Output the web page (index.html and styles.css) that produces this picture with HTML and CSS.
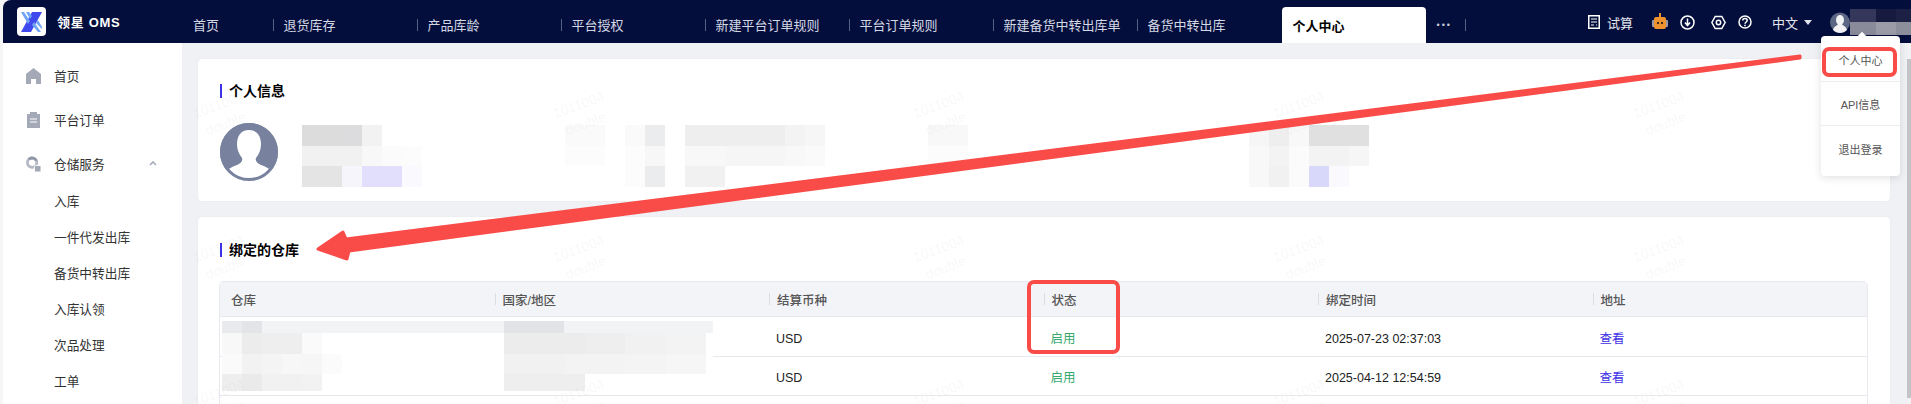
FILE: index.html
```html
<!DOCTYPE html>
<html lang="zh-CN">
<head>
    <meta charset="UTF-8">
    <title>个人中心 - 领星 OMS</title>
    <link rel="stylesheet" href="styles.css">
</head>
<body>
<div class="page">
    <header class="topbar">
        <div class="brand">
            <div class="logo">
                <svg width="29" height="29" viewBox="0 0 29 29">
                    <path d="M15 5h10L14 25H4z" fill="#3f49ee"/>
                    <path d="M4 5h3l6 9-2 3zM9 5h3l3 4-2 3z" fill="#6fa4f7"/>
                    <path d="M15 18l2-3 7 10h-3zM19 16l2-3 4 7v2z" fill="#6fa4f7"/>
                </svg>
            </div>
            <span class="brand-name">领星 OMS</span>
        </div>
        <nav class="tabs">
            <a class="tab tab-first">首页</a>
            <a class="tab">退货库存</a>
            <a class="tab">产品库龄</a>
            <a class="tab">平台授权</a>
            <a class="tab">新建平台订单规则</a>
            <a class="tab">平台订单规则</a>
            <a class="tab">新建备货中转出库单</a>
            <a class="tab">备货中转出库</a>
            <a class="tab tab-active">个人中心</a>
            <span class="tab-more">•••</span>
        </nav>
        <div class="tools">
            <svg class="tool-calc" width="12" height="14" viewBox="0 0 12 14" fill="none" stroke="#fff">
                <rect x="0.75" y="0.75" width="10.5" height="12.5" stroke-width="1.5"/>
                <path d="M3 4h6M3 7h6M3 10h3M8 10h1" stroke-width="1.2"/>
            </svg>
            <span class="tool-label">试算</span>
            <svg class="tool-robot" width="16" height="16" viewBox="0 0 16 16">
                <rect x="7" y="0" width="2" height="5" fill="#e8912d"/>
                <rect x="0" y="7" width="3" height="7" rx="1" fill="#9a9aa4"/>
                <rect x="13" y="7" width="3" height="7" rx="1" fill="#9a9aa4"/>
                <rect x="2" y="4" width="12" height="12" rx="2" fill="#ee9330"/>
                <rect x="5" y="9" width="2" height="2" fill="#3a2a20"/>
                <rect x="9" y="9" width="2" height="2" fill="#3a2a20"/>
            </svg>
            <svg class="tool-down" width="15" height="15" viewBox="0 0 15 15" fill="none" stroke="#fff">
                <circle cx="7.5" cy="7.5" r="6.5" stroke-width="1.5"/>
                <path d="M7.5 3.5v6M5 7.5l2.5 3 2.5-3" stroke-width="1.5"/>
            </svg>
            <svg class="tool-hex" width="15" height="15" viewBox="0 0 15 15" fill="none" stroke="#fff" stroke-width="1.5">
                <path d="M4.2 1.5h6.6l3.3 6-3.3 6H4.2l-3.3-6z"/>
                <circle cx="7.5" cy="7.5" r="2.2"/>
            </svg>
            <svg class="tool-help" width="14" height="14" viewBox="0 0 14 14" fill="none" stroke="#fff" stroke-width="1.5">
                <circle cx="7" cy="7" r="6"/>
                <path d="M4.8 5.4C4.8 3 9.2 3 9.2 5.4 9.2 7 7 7 7 8.8M7 9.8v1.4"/>
            </svg>
            <span class="tool-lang">中文</span>
            <span class="caret"></span>
            <svg class="user-avatar" width="20" height="21" viewBox="0 0 20 21">
                <circle cx="10" cy="10.5" r="10" fill="#5c6684"/>
                <ellipse cx="10" cy="8" rx="4" ry="5" fill="#f2f2f4"/>
                <path d="M3 18c1-4 4-4 5-6h4c1 2 4 2 5 6-2 2-4 3-7 3s-5-1-7-3z" fill="#f2f2f4"/>
            </svg>
            <div class="user-blur">
                <i class="u1"></i><i class="u2"></i><i class="u3"></i>
                <i class="u4"></i><i class="u5"></i><i class="u6"></i>
            </div>
        </div>
    </header>

    <div class="layout">
        <aside class="sidebar">
            <a class="nav-item">
                <svg width="15" height="16" viewBox="0 0 15 16"><path d="M7.5 0L15 6v10h-5v-5H5v5H0V6z" fill="#a3a9b7"/></svg>
                首页
            </a>
            <a class="nav-item">
                <svg width="15" height="16" viewBox="0 0 15 16">
                    <path d="M1 2h3V0h7v2h3v14H1z" fill="#a3a9b7"/>
                    <path d="M4 7h7M4 10h7" stroke="#fff"/>
                </svg>
                平台订单
            </a>
            <a class="nav-item">
                <svg width="15" height="16" viewBox="0 0 16 17">
                    <circle cx="6.5" cy="7" r="5" fill="none" stroke="#b4b9c5" stroke-width="3"/>
                    <path d="M3 3.500A5 5 0 0 1 11 5" fill="none" stroke="#8f96a6" stroke-width="3"/>
                    <rect x="9" y="10" width="7" height="7" rx="1" stroke="#fff" fill="#a3a9b7"/>
                </svg>
                仓储服务
                <svg class="chevron" width="8" height="5" viewBox="0 0 8 5"><path d="M1 4l3-3 3 3" fill="none" stroke="#a3a9b7" stroke-width="1.600"/></svg>
            </a>
            <div class="sub-nav">
                <a class="sub-item">入库</a>
                <a class="sub-item">一件代发出库</a>
                <a class="sub-item">备货中转出库</a>
                <a class="sub-item">入库认领</a>
                <a class="sub-item">次品处理</a>
                <a class="sub-item">工单</a>
            </div>
        </aside>

        <main class="content">
            <section class="card card-profile">
                <h2 class="card-title">个人信息</h2>
                <div class="profile">
                    <svg class="profile-avatar" width="58" height="58" viewBox="0 0 58 58">
                        <circle cx="29" cy="29" r="29" fill="#78829e"/>
                        <path d="M29 7c8 0 12 6 12 14 0 6-2 10-5 14-1 3 1 5 5 7 5 2 8 3 10 6-5 6-13 10-22 10s-17-4-22-10c2-3 5-4 10-6 4-2 6-4 5-7-3-4-5-8-5-14 0-8 4-14 12-14z" fill="#fff"/>
                        <circle cx="29" cy="29" r="27.5" fill="none" stroke="#78829e" stroke-width="3"/>
                    </svg>
                    <div class="mosaic mosaic-a">
                        <i class="dc"></i><i class="dc"></i><i class="dd"></i><i class="f2"></i><i></i><i></i>
                        <i class="f1"></i><i class="f1"></i><i class="f1"></i><i class="f8"></i><i class="fb"></i><i class="fc"></i>
                        <i class="e4"></i><i class="e4"></i><i class="v1"></i><i class="v2"></i><i class="v2"></i><i class="v3"></i>
                    </div>
                    <div class="mosaic mosaic-b">
                        <i class="fa"></i><i class="fa"></i><i></i><i class="fa"></i><i class="eb"></i><i></i><i class="ee"></i><i class="ee"></i><i class="ee"></i><i class="ee"></i><i class="ee"></i><i class="f3"></i><i class="f6"></i>
                        <i class="fc"></i><i class="fc"></i><i></i><i class="fc"></i><i class="f7"></i><i></i><i class="f8"></i><i class="f8"></i><i class="f6"></i><i class="f6"></i><i class="f6"></i><i class="f8"></i><i class="fa"></i>
                        <i></i><i></i><i></i><i class="fc"></i><i class="eb"></i><i></i><i class="f1"></i><i class="f1"></i><i></i><i></i><i></i><i></i><i></i>
                    </div>
                    <div class="mosaic mosaic-c">
                        <i class="f8"></i><i class="f8"></i>
                        <i class="fc"></i><i class="fc"></i>
                        <i></i><i></i>
                    </div>
                    <div class="mosaic mosaic-d">
                        <i class="f6"></i><i class="ee"></i><i class="f8"></i><i class="e1"></i><i class="e1"></i><i class="e1"></i>
                        <i class="f8"></i><i class="f3"></i><i class="fb"></i><i class="f3"></i><i class="f3"></i><i class="f6"></i>
                        <i class="f8"></i><i class="f1"></i><i class="fb"></i><i class="v4"></i><i class="v3"></i><i></i>
                    </div>
                </div>
            </section>

            <section class="card card-warehouse">
                <h2 class="card-title">绑定的仓库</h2>
                <div class="table">
                    <div class="row row-head">
                        <div class="cell">仓库</div>
                        <div class="cell">国家/地区</div>
                        <div class="cell">结算币种</div>
                        <div class="cell">状态</div>
                        <div class="cell">绑定时间</div>
                        <div class="cell">地址</div>
                    </div>
                    <div class="row">
                        <div class="cell"></div>
                        <div class="cell"></div>
                        <div class="cell cell-latin">USD</div>
                        <div class="cell status-on">启用</div>
                        <div class="cell cell-latin">2025-07-23 02:37:03</div>
                        <div class="cell"><a class="link">查看</a></div>
                    </div>
                    <div class="row">
                        <div class="cell"></div>
                        <div class="cell"></div>
                        <div class="cell cell-latin">USD</div>
                        <div class="cell status-on">启用</div>
                        <div class="cell cell-latin">2025-04-12 12:54:59</div>
                        <div class="cell"><a class="link">查看</a></div>
                    </div>
                    <div class="row">
                        <div class="cell"></div><div class="cell"></div><div class="cell"></div>
                        <div class="cell"></div><div class="cell"></div><div class="cell"></div>
                    </div>
                    <div class="table-blur">
                        <div class="blur-strip">
                            <i class="s1"></i><i class="s2"></i><i class="s3"></i><i class="s2b"></i><i class="s3b"></i>
                        </div>
                        <div class="mosaic mosaic-left">
                            <i class="f8"></i><i class="ec"></i><i class="ee"></i><i class="ee"></i><i class="fa"></i><i></i>
                            <i class="fa"></i><i class="f2"></i><i class="f4"></i><i class="f7"></i><i class="f6"></i><i class="fb"></i>
                            <i class="ee"></i><i class="ea"></i><i class="f1"></i><i class="f1"></i><i class="f2"></i><i></i>
                        </div>
                        <div class="mosaic mosaic-right">
                            <i class="ec"></i><i class="ec"></i><i class="ec"></i><i class="ec"></i><i class="ee"></i><i class="ee"></i><i class="f1"></i><i class="f1"></i><i class="f3"></i><i class="f3"></i>
                            <i class="f1"></i><i class="f1"></i><i class="f1"></i><i class="f3"></i><i class="f3"></i><i class="f3"></i><i class="f4"></i><i class="f4"></i><i class="f6"></i><i class="f6"></i>
                            <i class="ee"></i><i class="ee"></i><i class="ee"></i><i class="ee"></i><i></i><i></i><i></i><i></i><i></i><i></i>
                        </div>
                    </div>
                </div>
            </section>
        </main>

        <div class="scrollbar"><div class="scroll-thumb"></div></div>
    </div>

    <!-- watermark tiles -->
    <div class="watermarks">
        <span class="mark">1011004<br>double</span><span class="mark">1011004<br>double</span><span class="mark">1011004<br>double</span><span class="mark">1011004<br>double</span><span class="mark">1011004<br>double</span>
        <span class="mark">1011004<br>double</span><span class="mark">1011004<br>double</span><span class="mark">1011004<br>double</span><span class="mark">1011004<br>double</span><span class="mark">1011004<br>double</span>
        <span class="mark">1011004<br>double</span><span class="mark">1011004<br>double</span><span class="mark">1011004<br>double</span><span class="mark">1011004<br>double</span><span class="mark">1011004<br>double</span>
    </div>

    <div class="user-menu">
        <a class="menu-item">个人中心</a>
        <a class="menu-item">API信息</a>
        <a class="menu-item">退出登录</a>
    </div>

    <!-- red marks drawn on the screenshot -->
    <svg class="annotations" width="1911" height="404" viewBox="0 0 1911 404">
        <path d="M318 249L343 232 346 239 1800 56V58L349 251 347 259z" fill="#f94c48" stroke="#f94c48" stroke-width="3" stroke-linejoin="round"/>
        <rect x="1824" y="49" width="71" height="26" rx="5" fill="none" stroke="#f94c48" stroke-width="4"/>
        <rect x="1029" y="282" width="89" height="70" rx="5" fill="none" stroke="#f94c48" stroke-width="4"/>
    </svg>
</div>
</body>
</html>
```

FILE: styles.css
```css
* {
    box-sizing: border-box;
}

body {
    margin: 0;
    font-family: "Liberation Sans", "Noto Sans CJK SC", sans-serif;
    font-size: 13px;
    color: #333;
}

.page {
    position: relative;
    height: 404px;
    padding-left: 3px;
    overflow: hidden;
    background-color: #f6f6f8;
}

/* top bar */
.topbar {
    display: flex;
    height: 43px;
    background-color: #040e3c;
    border-top-left-radius: 8px;
}

.brand {
    display: flex;
    align-items: flex-start;
    width: 180px;
    padding: 7px 0 0 14px;
}

.logo {
    width: 29px;
    height: 29px;
    background-color: #fff;
    border-radius: 4px;
}

.brand-name {
    margin: 5px 0 0 11px;
    font-size: 13px;
    font-weight: bold;
    letter-spacing: 0.7px;
    color: #fff;
    white-space: nowrap;
}

.tabs {
    display: flex;
    color: #d4d8e4;
}

.tab {
    display: flex;
    align-items: center;
    width: 144px;
    padding-top: 5px;
    white-space: nowrap;
}

.tab::before {
    content: "";
    width: 1px;
    height: 12px;
    margin: 2px 10px 0 0;
    background-color: #59607f;
}

.tab-first {
    width: 89.500px;
    padding-left: 10px;
}

.tab-first::before {
    display: none;
}

.tab-active {
    height: 36px;
    margin: 7px 0 0 1px;
    padding: 0 0 0 11px;
    font-weight: bold;
    color: #000;
    background-color: #fff;
    border-radius: 4px 4px 0 0;
}

.tab-active::before {
    display: none;
}

.tab-more {
    display: flex;
    align-items: center;
    width: 40px;
    height: 12px;
    margin-top: 19px;
    padding-left: 11px;
    font-size: 9px;
    letter-spacing: 2px;
    color: #c8ccd8;
    border-right: 1px solid #59607f;
}

.tools {
    display: flex;
    align-items: center;
    margin-left: auto;
    height: 43px;
    padding-top: 1px;
    color: #e4e6ee;
}

.tool-label {
    margin-left: 7px;
    width: 26px;
    white-space: nowrap;
}

.tool-robot {
    margin: -2px 0 0 19px;
}

.tool-down {
    margin-left: 12px;
}

.tool-hex {
    margin-left: 16px;
}

.tool-help {
    margin-left: 12px;
}

.tool-lang {
    margin-left: 20px;
    width: 26px;
}

.caret {
    width: 0;
    height: 0;
    margin-left: 6px;
    border-top: 5px solid #dfe2ea;
    border-left: 4px solid transparent;
    border-right: 4px solid transparent;
}

.user-avatar {
    margin-left: 18px;
}

.user-blur {
    display: grid;
    grid-template-columns: 26px 20px 15px;
    grid-template-rows: 13px 13px;
}

.u1 { background-color: #35375a; }
.u2 { background-color: #171a3f; }
.u3 { background-color: #1d2045; }
.u4 { background-color: #8a8b9a; }
.u5 { background-color: #9a9ba6; }
.u6 { background-color: #8d8e9c; }

/* page body */
.layout {
    display: flex;
    height: 361px;
}

.sidebar {
    width: 179px;
    flex-shrink: 0;
    padding-top: 10.500px;
    font-size: 12.700px;
    background-color: #fff;
}

.nav-item {
    display: flex;
    align-items: center;
    gap: 13px;
    height: 44px;
    padding: 0 25px 0 23px;
}

.chevron {
    margin-left: auto;
}

.sub-nav {
    margin-top: -3px;
}

.sub-item {
    display: flex;
    align-items: center;
    height: 36px;
    padding-left: 51px;
}

.content {
    flex: 1;
    padding: 16px 17px 0 16px;
    background-color: #eff1f5;
    overflow: hidden;
}

.scrollbar {
    width: 4px;
    padding-top: 16px;
    background-color: #f2f2f4;
}

.scroll-thumb {
    height: 339px;
    background-color: #c4c4c6;
}

.card {
    padding: 25px 23px 20px 22px;
    background-color: #fff;
    border-radius: 4px;
    box-shadow: 0 0 1px rgba(0, 0, 0, 0.12);
}

.card-profile {
    height: 142px;
}

.card-warehouse {
    height: 220px;
    margin-top: 16px;
    padding-top: 26px;
}

.card-title {
    height: 14px;
    margin: 0;
    padding-left: 7px;
    font-size: 14px;
    line-height: 14px;
    font-weight: bold;
    color: #000;
    border-left: 2px solid #3d32e6;
}

/* profile row, the blocks stand for censored text */
.profile {
    display: flex;
    align-items: flex-start;
    margin-top: 25px;
}

.profile-avatar {
    flex-shrink: 0;
}

.mosaic {
    display: grid;
    grid-auto-rows: 20.500px;
    grid-template-columns: repeat(6, 20px);
    flex-shrink: 0;
}

.profile .mosaic {
    margin-top: 2px;
}

.mosaic-a { margin-left: 24px; }
.mosaic-b { margin-left: 143px; grid-template-columns: repeat(13, 20px); }
.mosaic-c { margin-left: 103px; grid-template-columns: repeat(2, 20px); }
.mosaic-d { margin-left: 281px; }

.dc { background-color: #dcdcdc; }
.dd { background-color: #dcdcde; }
.e1 { background-color: #e0e0e0; }
.e4 { background-color: #e4e4e4; }
.ea { background-color: #eaeaea; }
.eb { background-color: #ebecee; }
.ec { background-color: #ececec; }
.ee { background-color: #eeeeee; }
.f1 { background-color: #f1f1f1; }
.f2 { background-color: #f2f2f2; }
.f3 { background-color: #f3f3f3; }
.f4 { background-color: #f4f4f4; }
.f6 { background-color: #f6f6f6; }
.f7 { background-color: #f7f7f7; }
.f8 { background-color: #f8f8f8; }
.fa { background-color: #fafafa; }
.fb { background-color: #fbfbfb; }
.fc { background-color: #fcfcfc; }
.v1 { background-color: #f5f5fb; }
.v2 { background-color: #e1dffb; }
.v3 { background-color: #f9f9fe; }
.v4 { background-color: #d8d8fa; }

/* warehouse table */
.table {
    position: relative;
    margin-top: 25px;
    font-size: 12.500px;
    border-radius: 4px 4px 0 0;
    box-shadow: 0 0 0 1px #e8e9ee;
}

.row {
    display: grid;
    grid-template-columns: repeat(6, 1fr);
    height: 39.500px;
    border-bottom: 1px solid #e8e9ee;
}

.row-head {
    height: 35px;
    font-weight: 500;
    background-color: #f3f4f8;
}

.cell {
    display: flex;
    align-items: center;
    padding: 2px 0 0 7px;
    color: #222;
}

.cell-latin {
    padding-top: 5px;
}

.row-head .cell {
    padding: 0;
    color: #555;
}

.row-head .cell::before {
    content: "";
    width: 1px;
    height: 12px;
    margin-right: 7px;
    background-color: #dcdde3;
}

.row-head .cell:first-child {
    padding-left: 11px;
}

.row-head .cell:first-child::before {
    display: none;
}

.cell.status-on {
    color: #38a96e;
}

.link {
    color: #3d32e6;
}

.table-blur {
    position: absolute;
    top: 39px;
    left: 2px;
    width: 491px;
}

.blur-strip {
    display: flex;
    height: 12px;
    background-color: #f2f3f5;
}

.blur-strip i {
    display: block;
    height: 12px;
}

.s1 { width: 20px; background-color: #e9eaed; }
.s2 { width: 20px; background-color: #e3e4e8; }
.s3 { width: 242px; }
.s2b { width: 60px; background-color: #e2e3e7; }
.s3b { width: 149px; }

.mosaic-left,
.mosaic-right {
    position: absolute;
    top: 12px;
    height: 58px;
    grid-template-rows: 20.500px 20.500px 17px;
    background-color: #fff;
}

.mosaic-left {
    left: 0;
    width: 282px;
}

.mosaic-right {
    left: 282px;
    width: 209px;
    grid-template-columns: repeat(10, 20.200px);
}

/* watermark layer */
.watermarks {
    position: absolute;
    top: 42px;
    left: 42px;
    display: grid;
    grid-template-columns: repeat(5, 360px);
    grid-auto-rows: 144px;
    pointer-events: none;
}

.mark {
    display: flex;
    align-items: center;
    justify-content: center;
    font-size: 14px;
    line-height: 20px;
    text-align: center;
    color: rgba(60, 60, 90, 0.05);
    transform: rotate(-20deg);
}

/* dropdown */
.user-menu {
    position: absolute;
    top: 36px;
    left: 1821px;
    width: 79px;
    padding: 2px 0 4px;
    background-color: #fff;
    border-radius: 4px;
    box-shadow: 0 2px 8px rgba(0, 0, 0, 0.12);
}

.user-menu::before {
    content: "";
    position: absolute;
    top: -3px;
    left: 38px;
    width: 6px;
    height: 6px;
    background-color: #fff;
    transform: rotate(45deg);
}

.menu-item {
    display: flex;
    align-items: center;
    justify-content: center;
    height: 44px;
    font-size: 11px;
    color: #555;
    border-bottom: 1px solid #ececf0;
}

.menu-item:last-child {
    height: 46px;
    border-bottom: none;
}

.annotations {
    position: absolute;
    top: 0;
    left: 0;
    pointer-events: none;
}
```
